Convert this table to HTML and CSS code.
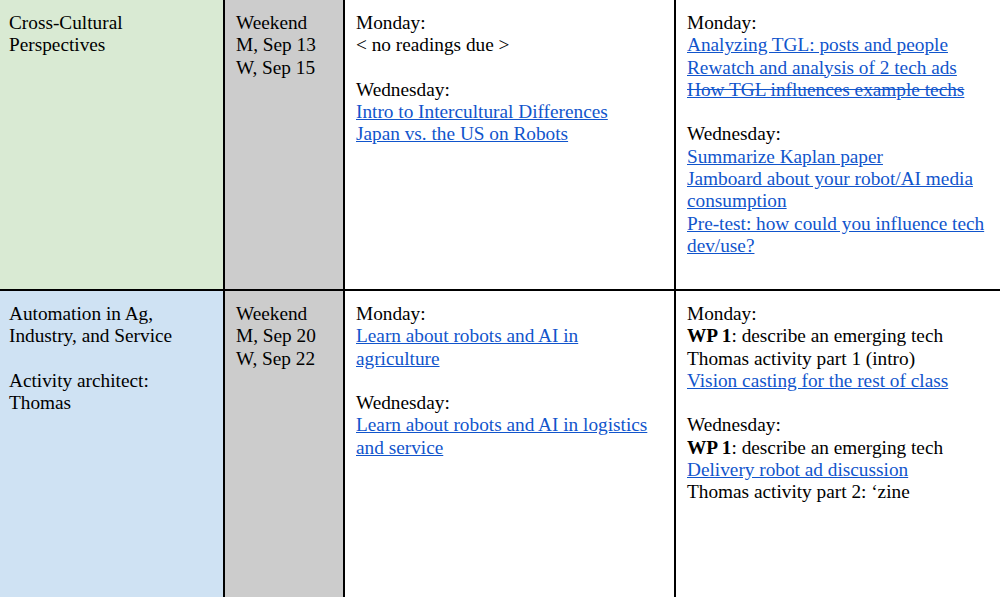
FILE: index.html
```html
<!DOCTYPE html>
<html>
<head>
<meta charset="utf-8">
<link rel="stylesheet" href="styles.css">
</head>
<body>
<div class="table">
  <div class="cell topic green">
    <p>Cross-Cultural<br>Perspectives</p>
  </div>
  <div class="cell dates">
    <p>Weekend<br>M, Sep 13<br>W, Sep 15</p>
  </div>
  <div class="cell">
    <p>Monday:<br>&lt; no readings due &gt;</p>
    <p>Wednesday:<br><a href="#">Intro to Intercultural Differences</a><br><a href="#">Japan vs. the US on Robots</a></p>
  </div>
  <div class="cell">
    <p>Monday:<br><a href="#">Analyzing TGL: posts and people</a><br><a href="#">Rewatch and analysis of 2 tech ads</a><br><a href="#" class="struck">How TGL influences example techs</a></p>
    <p>Wednesday:<br><a href="#">Summarize Kaplan paper</a><br><a href="#">Jamboard about your robot/AI media consumption</a><br><a href="#">Pre-test: how could you influence tech dev/use?</a></p>
  </div>

  <div class="cell topic blue">
    <p>Automation in Ag,<br>Industry, and Service</p>
    <p>Activity architect:<br>Thomas</p>
  </div>
  <div class="cell dates">
    <p>Weekend<br>M, Sep 20<br>W, Sep 22</p>
  </div>
  <div class="cell">
    <p>Monday:<br><a href="#">Learn about robots and AI in agriculture</a></p>
    <p>Wednesday:<br><a href="#">Learn about robots and AI in logistics and service</a></p>
  </div>
  <div class="cell">
    <p>Monday:<br><b>WP 1</b>: describe an emerging tech<br>Thomas activity part 1 (intro)<br><a href="#">Vision casting for the rest of class</a></p>
    <p>Wednesday:<br><b>WP 1</b>: describe an emerging tech<br><a href="#">Delivery robot ad discussion</a><br>Thomas activity part 2: ‘zine</p>
  </div>
</div>
</body>
</html>
```
FILE: styles.css
```css
html, body {
  margin: 0;
  padding: 0;
  background: #ffffff;
  overflow: hidden;
}

.table {
  display: grid;
  grid-template-columns: 223px 118px 329px 1fr;
  grid-template-rows: 289px 1fr;
  gap: 2px;
  background: #000000;
  width: 1000px;
  height: 620px;
  font-family: "Liberation Serif", "Times New Roman", serif;
  font-size: 19.3px;
  line-height: 22.3px;
  color: #000000;
}

.cell {
  background: #ffffff;
  padding: 12px 12px 0 11px;
}

.cell:nth-child(-n+4) {
  padding-top: 12px;
}

.cell.topic {
  padding-left: 9px;
}

.green {
  background: #d9ead3;
}

.blue {
  background: #cfe2f3;
}

.dates {
  background: #cccccc;
}

p {
  margin: 0;
}

p + p {
  margin-top: 22.3px;
}

a {
  color: #1155cc;
  text-decoration: underline;
}

a.struck {
  text-decoration: underline line-through;
}

b {
  font-weight: bold;
}
```
